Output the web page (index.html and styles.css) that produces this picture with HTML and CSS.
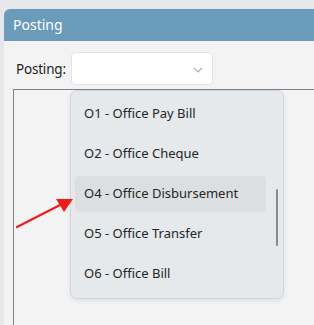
FILE: index.html
```html
<!DOCTYPE html>
<html lang="en">
<head>
  <meta charset="UTF-8">
  <title>Posting</title>
  <link rel="stylesheet" href="styles.css">
</head>
<body>

<div class="window">
  <div class="titlebar">Posting</div>

  <div class="form-row">
    <label class="field-label">Posting:</label>
    <div class="combo">
      <svg class="chevron" width="10" height="6" viewBox="0 0 10 6">
        <path d="M1 1 L5 5 L9 1" fill="none" stroke="#a9adb3" stroke-width="1.1"/>
      </svg>
    </div>
  </div>

  <div class="panel"></div>
</div>

<!-- Open dropdown list -->
<div class="popup">
  <div class="item">O1 - Office Pay Bill</div>
  <div class="item">O2 - Office Cheque</div>
  <div class="item selected">O4 - Office Disbursement</div>
  <div class="item">O5 - Office Transfer</div>
  <div class="item">O6 - Office Bill</div>
  <div class="scrollbar"></div>
</div>

<!-- Red annotation arrow -->
<svg class="arrow" width="80" height="50" viewBox="0 0 80 50">
  <line x1="17" y1="47" x2="62" y2="24" stroke="#ee1c1c" stroke-width="2.2" stroke-linecap="round"/>
  <polygon points="73,19 56,19 64,32" fill="#ee1c1c"/>
</svg>

</body>
</html>
```

FILE: styles.css
```css
body {
  margin: 0;
  height: 325px;
  overflow: hidden;
  background: #e5e7ea;
  font-family: "Noto Sans", "Open Sans", sans-serif;
  color: #222;
}
.window {
  margin: 9px 0 0 4px;
  height: 316px;
  background: #f3f3f3;
  border-top-left-radius: 6px;
  overflow: hidden;
  display: flex;
  flex-direction: column;
}
.titlebar {
  height: 32px;
  line-height: 31px;
  background: #6a9bbb;
  color: #fff;
  font-size: 14px;
  padding-left: 9px;
}
.form-row {
  display: flex;
  align-items: center;
  padding: 11px 0 0 12px;
}
.field-label {
  width: 55px;
  font-size: 13.5px;
  letter-spacing: -0.2px;
  color: #1e1e1e;
}
.combo {
  width: 142px;
  height: 33px;
  box-sizing: border-box;
  background: #fff;
  border: 1px solid #e2e4e7;
  border-radius: 4px;
  display: flex;
  align-items: center;
  justify-content: flex-end;
  padding-right: 9px;
}
.chevron {
  margin-top: 3px;
}
.panel {
  flex: 1;
  margin: 4px 0 0 9px;
  border-left: 1px solid #7c8289;
  border-top: 1px solid #7c8289;
}

.popup {
  position: absolute;
  left: 70px;
  top: 90px;
  width: 214px;
  height: 209px;
  box-sizing: border-box;
  padding: 5px 17px 0 4px;
  background: #e6e9ec;
  border: 1px solid #d0d6de;
  border-radius: 7px;
  box-shadow: 0 2px 5px rgba(0, 0, 0, 0.08);
  display: flex;
  flex-direction: column;
  gap: 4px;
}
.item {
  height: 36px;
  line-height: 35px;
  padding-left: 9px;
  font-size: 13px;
  color: #252525;
  border-radius: 4px;
}
.item.selected {
  background: #dcdfe2;
}
.scrollbar {
  position: absolute;
  left: 205px;
  top: 98px;
  width: 2px;
  height: 57px;
  background: #8b8b8b;
  border-radius: 1px;
}
.arrow {
  position: absolute;
  left: 0;
  top: 180px;
}
```
